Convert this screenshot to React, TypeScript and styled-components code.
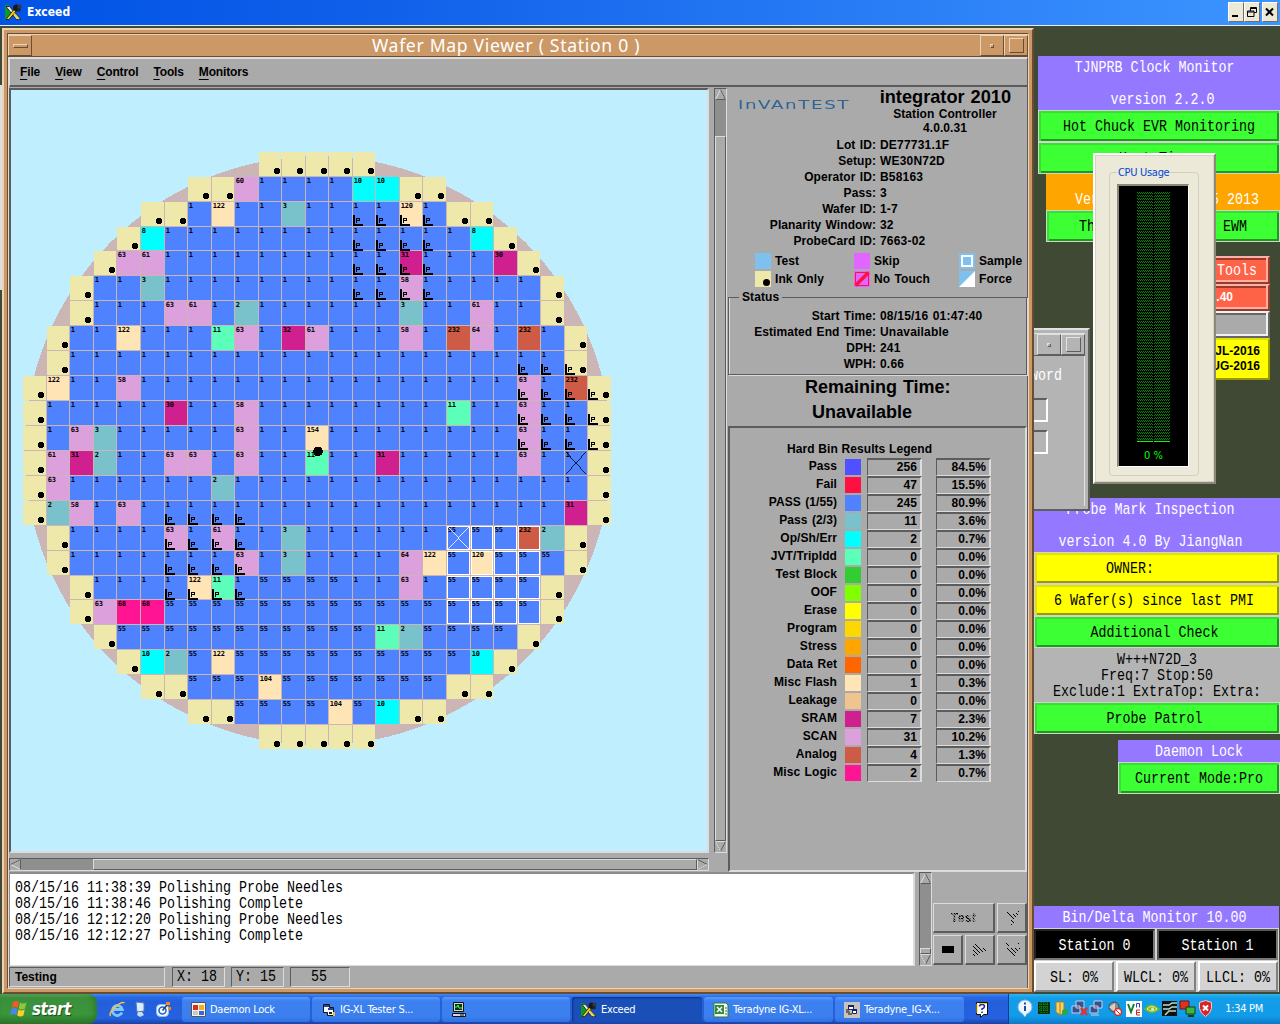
import React from "react";
import styled, { createGlobalStyle, css } from "styled-components";

const GlobalStyle = createGlobalStyle`
  * { box-sizing: border-box; }
  html, body { margin: 0; padding: 0; }
  body { width: 1280px; height: 1024px; overflow: hidden; font-family: "Liberation Sans", Arial, sans-serif; }
`;

const UI = `"Liberation Sans", Arial, sans-serif`;
const TAHOMA = `"DejaVu Sans Condensed", "DejaVu Sans", sans-serif`;

const bevel = (light: string, dark: string, w = 2) => css`
  border-style: solid;
  border-width: ${w}px;
  border-color: ${light} ${dark} ${dark} ${light};
`;

const Screen = styled.div`
  position: relative;
  display: flex;
  flex-direction: column;
  width: 1280px;
  height: 1024px;
  overflow: hidden;
  background: #3f4933;
`;

/* ---------- Exceed title bar ---------- */
const ExceedBar = styled.header`
  display: flex;
  align-items: center;
  height: 26px;
  padding: 0 2px 1px 5px;
  background: linear-gradient(90deg, #0053e5, #1160ea 30%, #3c95ff);
  border-bottom: 1px solid #e6eefa;
`;
const ExceedTitle = styled.span`
  flex: 1;
  margin-left: 5px;
  color: #fff;
  font: bold 12px/16px ${TAHOMA};
`;
const WinButton = styled.span<{ $gap?: boolean }>`
  display: flex;
  align-items: center;
  justify-content: center;
  width: 16px;
  height: 20px;
  margin-left: ${(p) => (p.$gap ? 2 : 0)}px;
  background: #ece9d8;
  ${bevel("#fff", "#716f64", 1)}
`;

/* ---------- Text helpers ---------- */
const Mono = styled.span<{ $color?: string }>`
  display: inline-block;
  height: 12px;
  margin: 2px 0;
  font: 13.333px/12px "Liberation Mono", monospace;
  white-space: pre;
  color: ${(p) => p.$color ?? "#000"};
  transform: translateY(0.8px) scaleY(1.26);
`;

/* ---------- Free windows on the desktop ---------- */
const Win = styled.section<{ $x: number; $y: number; $w: number; $h?: number }>`
  position: absolute;
  left: ${(p) => p.$x}px;
  top: ${(p) => p.$y}px;
  width: ${(p) => p.$w}px;
  ${(p) => p.$h && `height: ${p.$h}px;`}
  display: flex;
  flex-direction: column;
`;
const Banner = styled.div<{ $h: number; $bg: string; $pad?: number; $shift?: number }>`
  display: flex;
  flex-direction: column;
  align-items: center;
  justify-content: space-between;
  height: ${(p) => p.$h}px;
  padding: ${(p) => p.$pad ?? 3}px 0;
  padding-right: ${(p) => p.$shift ?? 0}px;
  background: ${(p) => p.$bg};
`;
const XButton = styled.div<{ $bg: string; $l: string; $d: string; $right?: number }>`
  display: flex;
  align-items: center;
  justify-content: center;
  height: 32px;
  padding-right: ${(p) => p.$right ?? 0}px;
  background: ${(p) => p.$bg};
  border: 1px solid #d3d3d3;
  box-shadow: inset 2px 2px 0 ${(p) => p.$l}, inset -2px -2px 0 ${(p) => p.$d};
`;
const Split = styled.div<{ $w: number; $ml?: number }>`
  display: flex;
  justify-content: space-between;
  width: ${(p) => p.$w}px;
  margin-left: ${(p) => p.$ml ?? 0}px;
`;
const PURPLE = "#9478ff";
const GREEN = { $bg: "#3cff34", $l: "#36e02e", $d: "#1f9a1b" };
const YELLOW = { $bg: "#ffff00", $l: "#e2e200", $d: "#9a9a00" };

/* ---------- Wafer window frame ---------- */
const Frame = styled(Win)`
  padding: 3px;
  background: #cc9966;
  ${bevel("#ecd3b8", "#664d33", 2)}
`;
const FrameInner = styled.div`
  display: flex;
  flex-direction: column;
  flex: 1;
  ${bevel("#664d33", "#ecd3b8", 1)}
`;
const FrameTitle = styled.div`
  display: flex;
  height: 23px;
  border-top: 1px solid #ecd3b8;
  border-bottom: 1px solid #664d33;
`;
const FrameButton = styled.span`
  display: flex;
  align-items: center;
  justify-content: center;
  width: 24px;
  ${bevel("#ecd3b8", "#664d33", 1)}
`;
const Bump = styled.i<{ $w: number; $h: number; $l?: string; $d?: string }>`
  width: ${(p) => p.$w}px;
  height: ${(p) => p.$h}px;
  ${(p) => bevel(p.$l ?? "#ecd3b8", p.$d ?? "#664d33", 1)}
`;
const FrameCaption = styled.h1`
  flex: 1;
  margin: 0;
  text-align: center;
  color: #fff;
  font: 400 17.6px/20px "Noto Sans", sans-serif;
  letter-spacing: 0.68px;
  white-space: pre;
`;
const Content = styled.div`
  display: flex;
  flex-direction: column;
  flex: 1;
  background: #aaaaaa;
  border-top: 1px solid #dcdcdc;
  border-left: 1px solid #dcdcdc;
  border-right: 1px solid #5c5c5c;
`;
const MenuBar = styled.nav`
  display: flex;
  gap: 15px;
  height: 29px;
  margin-bottom: 1px;
  padding: 5px 0 0 10px;
  font: bold 12px/16px ${UI};
  border-top: 1px solid #dcdcdc;
  border-left: 1px solid #dcdcdc;
  border-bottom: 2px solid #5c5c5c;
  letter-spacing: -0.14px;
`;
const MenuItem = styled.span`
  display: block;
  &::first-letter { text-decoration: underline; text-underline-offset: 3px; text-decoration-thickness: 1px; }
`;
const Upper = styled.div`
  display: flex;
  height: 784px;
`;
const MapColumn = styled.div`
  display: flex;
  flex-direction: column;
  width: 700px;
  gap: 5px;
`;
const MapFrame = styled.div`
  height: 765px;
  background: #bfefff;
  ${bevel("#5c5c5c", "#dcdcdc", 2)}
  svg { display: block; }
`;

/* ---------- Scroll bars ---------- */
const VScroll = styled.div<{ $h: number; $ml: number }>`
  display: flex;
  flex-direction: column;
  width: 13px;
  height: ${(p) => p.$h}px;
  margin-left: ${(p) => p.$ml}px;
  background: #8f8f8f;
  ${bevel("#5c5c5c", "#dcdcdc", 1)}
`;
const HScroll = styled.div`
  display: flex;
  height: 13px;
  background: #8f8f8f;
  ${bevel("#5c5c5c", "#dcdcdc", 1)}
`;
const Thumb = styled.span<{ $size?: number }>`
  flex: ${(p) => (p.$size ? `0 0 ${p.$size}px` : "1")};
  background: #aaa;
  ${bevel("#dcdcdc", "#5c5c5c", 1)}
`;
const Trough = styled.span<{ $size?: number }>`
  flex: ${(p) => (p.$size ? `0 0 ${p.$size}px` : "1")};
`;
const ArrowSvg = styled.svg`
  display: block;
  flex: none;
  background: #aaa;
`;
function Arrow({ dir }: { dir: "up" | "down" | "left" | "right" }) {
  const rot = { up: 0, right: 90, down: 180, left: 270 }[dir];
  const flip = dir === "down" || dir === "right";
  return (
    <ArrowSvg width="11" height="11" viewBox="0 0 11 11">
      <g transform={`rotate(${rot} 5.5 5.5)`} fill="none">
        <path d="M0.5 10.5 L5.5 0.5 L10.5 10.5" stroke={flip ? "#5c5c5c" : "#dcdcdc"} />
        <path d="M5.5 0.5 L10.5 10.5 H0.5" stroke={flip ? "#dcdcdc" : "#5c5c5c"} />
      </g>
    </ArrowSvg>
  );
}

/* ---------- Wafer map ---------- */
const BIN_COLORS: Record<string, string> = {
  "1": "#4f82ff", "55": "#4f82ff", "2": "#79c2cb", "3": "#79c2cb", "8": "#00ffff", "10": "#00ffff",
  "11": "#5cffb9", "122": "#ffe4b6", "120": "#ffe4b6", "104": "#ffe4b6", "154": "#ffe4b6",
  "30": "#d01f8f", "31": "#d01f8f", "32": "#d01f8f", "232": "#cd5b45", "68": "#ff1493",
  "58": "#dca0dc", "60": "#dca0dc", "61": "#dca0dc", "63": "#dca0dc", "64": "#dca0dc", i: "#eee8aa",
};
/* first column, then bins left to right; suffix p = probe mark, s = sample, k / w = crossed die, *n = repeat */
const ROWS: [number, string][] = [
  [10, "i*5"],
  [7, "i*2 60 1*4 10*2 i*2"],
  [5, "i*2 1 122 1*2 3 1*2 1p*2 120p 1p i*2"],
  [4, "i 8 1*8 1p*4 1 8 i"],
  [3, "i 63 61 1*8 1p*2 31p 1p 1*2 30 i"],
  [2, "i 1*2 3 1*8 1p*2 58p 1p 1*4 i"],
  [2, "i 1*3 63 61 1 2 1*6 3 1*2 61 1*2 i"],
  [1, "i 1*2 122 1*3 11 63 1 32 61 1*3 58 1 232 64 1 232 1 i"],
  [1, "i 1*19 1p*2 ip"],
  [0, "i 122 1*2 58 1*16 63p 1p 232p ip"],
  [0, "i 1*5 30 1*2 58 1*8 11 1*2 63p 1p*2 ip"],
  [0, "i 1 63 3 1*5 63 1*2 154 1*8 63p 1p*2 ip"],
  [0, "i 61 31 2 1*2 63*2 1 63 1*2 11 1*2 31 1*5 63 1 1k i"],
  [0, "i 63 1*6 2 1*15 i"],
  [0, "i 2 58 1 63 1 1p*4 1*13 31 i"],
  [1, "i 1*4 63p 1p 61p 1p 1 3 1*6 55sw 55s*2 232s 2 i"],
  [1, "i 1*4 1p*3 63p 1 3 1*4 64 122 55s 120s 55s*2 55 i"],
  [2, "i 1*3 1p 122p 11p 1p 55*4 1*2 63 1 55s*4 i"],
  [2, "i 63 68*2 55*12 55s*4 i"],
  [3, "i 55*11 11 2 55*4 i"],
  [4, "i 10 2 55 122 55*10 10 i"],
  [5, "i*2 55*3 104 55*7 i*2"],
  [7, "i*2 55*4 104 55 10 i*2"],
  [10, "i*5"],
];
const colX = (i: number) => Math.round(23.3 + 23.541 * i);
const rowY = (i: number) => Math.floor(152.22 + 24.93 * i);

const DieText = styled.text`
  font: bold 7px "DejaVu Sans Mono", monospace;
  letter-spacing: -0.2px;
`;
function Die({ c, r, code }: { c: number; r: number; code: string }) {
  const m = /^(i|\d+)([pskw]*)$/.exec(code)!;
  const bin = m[1];
  const f = m[2];
  const x = colX(c), y = rowY(r);
  const w = colX(c + 1) - x - 1, h = rowY(r + 1) - y - 1;
  const cross = f.includes("k") ? "#000" : f.includes("w") ? "#fff" : null;
  return (
    <g>
      <rect x={x} y={y} width={w} height={h} fill={BIN_COLORS[bin]} />
      {bin === "i" ? <circle cx={x + 18} cy={y + 19} r={3.2} /> : <DieText x={x + 0.8} y={y + 6}>{bin}</DieText>}
      {f.includes("p") && (
        <>
          <path d={`M${x} ${y + 13}h2v9h8v2h-10z`} />
          <path d={`M${x + 3.5} ${y + 21}v-4.5h2.5v2h-2`} fill="none" stroke="#000" />
        </>
      )}
      {f.includes("s") && <rect x={x + 0.5} y={y + 0.5} width={w - 1} height={h - 1} fill="none" stroke="#fff" />}
      {cross && <path d={`M${x + 1} ${y + 1}l${w - 2} ${h - 2}M${x + 1} ${y + h - 1}l${w - 2} ${2 - h}`} stroke={cross} strokeWidth="0.8" fill="none" />}
    </g>
  );
}
function WaferMap() {
  return (
    <svg width="696" height="761" viewBox="11 90 696 761" shapeRendering="crispEdges">
      <ellipse cx="318" cy="450.7" rx="293.5" ry="294.5" fill="#ccb5b5" />
      {ROWS.map(([start, spec], r) => {
        let c = start;
        return spec.split(" ").flatMap((t) => {
          const [code, n] = t.split("*");
          return Array.from({ length: Number(n ?? 1) }, () => {
            const k = c++;
            return <Die key={`${r}-${k}`} c={k} r={r} code={code} />;
          });
        });
      })}
      <circle cx="318" cy="451.5" r="4.8" />
    </svg>
  );
}

/* ---------- Right-hand information panel ---------- */
const InfoPanel = styled.aside`
  display: flex;
  flex-direction: column;
  width: 299px;
  margin-left: 1px;
  font: bold 12px/16px ${UI};
  letter-spacing: 0.08px;
  word-spacing: 0.9px;
`;
const Head = styled.div`
  display: flex;
  height: 49px;
`;
const Logo = styled.div`
  width: 138px;
  padding: 9px 0 0 10px;
  color: #2f6496;
  font: 400 12px/16px "DejaVu Sans", sans-serif;
  letter-spacing: 1px;
  span { display: inline-block; transform: scaleX(1.53); transform-origin: 0 0; }
`;
const Product = styled.div`
  display: flex;
  flex-direction: column;
  align-items: center;
  width: 158px;
  line-height: 14px;
  strong { font-size: 18.2px; line-height: 19px; letter-spacing: 0; white-space: nowrap; align-self: flex-end; margin-right: 13px; }
`;
const Field = styled.div`
  display: grid;
  grid-template-columns: 148px 1fr;
  column-gap: 4px;
  height: 16px;
  b { text-align: right; white-space: nowrap; }
  span { letter-spacing: 0.2px; }
`;
const Keys = styled.div`
  display: grid;
  grid-template-columns: 99px 105px 1fr;
  row-gap: 2px;
  padding: 4px 0 0 27px;
`;
const Key = styled.div`
  display: flex;
  gap: 4px;
  height: 16px;
  svg { display: block; flex: none; }
`;
const StatusBox = styled.fieldset`
  height: 85px;
  margin: 3px 0 0;
  padding: 3px 0 0;
  border: 1px solid #5c5c5c;
  box-shadow: 1px 1px 0 #dcdcdc, inset 1px 0 0 #dcdcdc;
  min-width: 0;
  legend { margin-left: 10px; padding: 0 3px; line-height: 15px; background: #aaa; }
  ${Field} { grid-template-columns: 147px 1fr; }
`;
const Remaining = styled.div`
  display: flex;
  flex-direction: column;
  height: 51px;
  padding-left: 77px;
  font: bold 18px/25px ${UI};
  letter-spacing: 0;
  white-space: nowrap;
  span + span { padding-left: 7px; }
`;
const Results = styled.div`
  flex: 1;
  padding: 13px 0 0;
  ${bevel("#5c5c5c", "#dcdcdc", 2)}
`;
const ResultsTitle = styled.h2`
  margin: 0 0 1px 57px;
  font: bold 12px/16px ${UI};
  letter-spacing: 0.05px;
  word-spacing: 0.4px;
`;
const BinRow = styled.div`
  display: grid;
  grid-template-columns: 107px 16px 55px 55px;
  height: 18px;
  line-height: 17px;
  column-gap: 0;
  grid-template-columns: 107px 8px 16px 6px 55px 14px 55px;
`;
const BinName = styled.span`
  grid-column: 1;
  text-align: right;
  white-space: nowrap;
`;
const Swatch = styled.i<{ $c: string }>`
  grid-column: 3;
  width: 16px;
  height: 16px;
  margin-top: 1px;
  background: ${(p) => p.$c};
`;
const Cell = styled.span<{ $col: number }>`
  grid-column: ${(p) => p.$col};
  height: 18px;
  padding-right: 3px;
  text-align: right;
  line-height: 15px;
  border: solid;
  border-width: 2px 2px 1px 1px;
  border-color: #5c5c5c #dcdcdc #dcdcdc #5c5c5c;
`;
const BINS: [string, string, string, string][] = [
  ["Pass", "#4f50ff", "256", "84.5%"],
  ["Fail", "#ff1040", "47", "15.5%"],
  ["PASS (1/55)", "#4f82ff", "245", "80.9%"],
  ["Pass (2/3)", "#79c2cb", "11", "3.6%"],
  ["Op/Sh/Err", "#00ffff", "2", "0.7%"],
  ["JVT/TripIdd", "#5cffb9", "0", "0.0%"],
  ["Test Block", "#32cd32", "0", "0.0%"],
  ["OOF", "#80ff00", "0", "0.0%"],
  ["Erase", "#ffff00", "0", "0.0%"],
  ["Program", "#ffd700", "0", "0.0%"],
  ["Stress", "#ffa500", "0", "0.0%"],
  ["Data Ret", "#ff6600", "0", "0.0%"],
  ["Misc Flash", "#ffe4b6", "1", "0.3%"],
  ["Leakage", "#eec591", "0", "0.0%"],
  ["SRAM", "#d01f8f", "7", "2.3%"],
  ["SCAN", "#dca0dc", "31", "10.2%"],
  ["Analog", "#cd5b45", "4", "1.3%"],
  ["Misc Logic", "#ff1493", "2", "0.7%"],
];
const LOT: [string, string][] = [
  ["Lot ID:", "DE77731.1F"], ["Setup:", "WE30N72D"], ["Operator ID:", "B58163"], ["Pass:", "3"],
  ["Wafer ID:", "1-7"], ["Planarity Window:", "32"], ["ProbeCard ID:", "7663-02"],
];
const STATUS: [string, string][] = [
  ["Start Time:", "08/15/16 01:47:40"], ["Estimated End Time:", "Unavailable"], ["DPH:", "241"], ["WPH:", "0.66"],
];

/* ---------- Lower strip ---------- */
const Lower = styled.div`
  display: flex;
  height: 95px;
`;
const Log = styled.div`
  display: flex;
  flex-direction: column;
  align-items: flex-start;
  width: 906px;
  height: 94px;
  padding: 5px 0 0 5px;
  background: #fff;
  border: solid;
  border-width: 2px 2px 1px 1px;
  border-color: #8c8c8c #dcdcdc #dcdcdc #8c8c8c;
`;
const Pad = styled.div`
  display: grid;
  grid-template-columns: 30px 30px 30px;
  grid-template-rows: 30px 30px;
  gap: 2px;
  padding: 31px 0 0 1px;
`;
const PadButton = styled.div<{ $wide?: boolean }>`
  display: flex;
  align-items: center;
  justify-content: center;
  grid-column: ${(p) => (p.$wide ? "span 2" : "auto")};
  ${bevel("#dcdcdc", "#5c5c5c", 1)}
  border-right-width: 2px;
  border-bottom-width: 2px;
`;
const Stippled = styled.span`
  font: bold 12px/14px ${UI};
  letter-spacing: 0.4px;
  color: transparent;
  background: repeating-linear-gradient(45deg, #000 0 1px, #888 1px 2px);
  background-clip: text;
  -webkit-background-clip: text;
`;
const StatusRow = styled.div`
  display: flex;
  align-items: flex-start;
  height: 21px;
`;
const StatusCell = styled.div<{ $w: number; $ml?: number }>`
  width: ${(p) => p.$w}px;
  height: 20px;
  margin-left: ${(p) => p.$ml ?? 0}px;
  padding-left: 5px;
  font: bold 12px/18px ${UI};
  ${bevel("#5c5c5c", "#dcdcdc", 1)}
`;
const StatusNum = styled(StatusCell)<{ $center?: boolean }>`
  padding-left: ${(p) => (p.$center ? 20 : 4)}px;
  line-height: 12px;
`;

function HatchTri({ kind }: { kind: "right" | "y1" | "y2" }) {
  const shape = {
    right: "M0 1 L14 8 L0 15Z",
    y1: "M0 1 L7 5 L14 1 L15 4 L9 9 V15 L6 15 V9 L0 4Z",
    y2: "M0 6 H15 L8 15Z M1 1 L5 4 M14 1 L10 4",
  }[kind];
  return (
    <svg width="18" height="18" viewBox="0 0 18 18" shapeRendering="crispEdges">
      <defs>
        <pattern id={`hatch-${kind}`} width="4" height="4" patternUnits="userSpaceOnUse">
          <path d="M0 0h1v1h-1zM1 1h1v1h-1zM2 2h1v1h-1zM3 3h1v1h-1z" fill="#000" />
        </pattern>
      </defs>
      <path d={shape} fill={`url(#hatch-${kind})`} stroke={kind === "y2" ? `url(#hatch-${kind})` : "none"} transform="translate(2 1)" />
    </svg>
  );
}

/* ---------- Password window ---------- */
const GreyFrame = styled(Win)`
  padding: 3px;
  background: #b4b4b4;
  ${bevel("#e2e2e2", "#5e5e5e", 2)}
`;
const GreyTitle = styled.div`
  display: flex;
  justify-content: flex-end;
  height: 23px;
  border-bottom: 1px solid #5e5e5e;
  border-top: 1px solid #e2e2e2;
`;
const GreyButton = styled.span`
  display: flex;
  align-items: center;
  justify-content: center;
  width: 24px;
  ${bevel("#e2e2e2", "#5e5e5e", 1)}
`;
const GreyBody = styled.div`
  display: flex;
  flex-direction: column;
  align-items: flex-end;
  flex: 1;
  padding: 11px 22px 0 0;
  border-right: 1px solid #e2e2e2;
`;
const Input = styled.div<{ $mt: number }>`
  width: 60px;
  height: 24px;
  margin: ${(p) => p.$mt}px 14px 0 0;
  ${bevel("#5e5e5e", "#fff", 2)}
`;

/* ---------- Tools window ---------- */
const ToolRow = styled.div<{ $h: number; $bg: string; $l: string; $d: string; $flat?: boolean }>`
  display: flex;
  flex-direction: column;
  justify-content: center;
  height: ${(p) => p.$h}px;
  background: ${(p) => p.$bg};
  ${(p) => bevel(p.$l, p.$d, 2)}
  box-shadow: ${(p) => (p.$flat ? "none" : `inset -2px -2px 0 ${p.$l}, inset 2px 2px 0 ${p.$d}`)};
  padding-right: ${(p) => (p.$flat ? 8 : 11)}px;
  text-align: right;
  font: bold 12px/15px ${UI};
`;
const Version = styled.span`
  padding-right: 24px;
  color: #fff;
`;

/* ---------- CPU usage ---------- */
const CpuWin = styled(Win)`
  padding: 11px 15px 6px 14px;
  background: #ece9d8;
  border: solid;
  border-width: 2px;
  border-color: #fff #8a877c #8a877c #fff;
  outline: 1px solid #d6d3c4;
  outline-offset: -3px;
`;
const CpuGroup = styled.fieldset`
  display: flex;
  flex: 1;
  margin: 0;
  padding: 5px 9px 6px 7px;
  min-width: 0;
  border: 1px solid #d0d0bf;
  border-radius: 4px;
  legend { padding: 0 1px; color: #0046d5; font: 11px/13px ${TAHOMA}; letter-spacing: -0.3px; white-space: nowrap; }
`;
const CpuScreen = styled.div`
  display: flex;
  flex-direction: column;
  align-items: center;
  height: 283px;
  width: 100%;
  padding-top: 6px;
  background: #000;
  ${bevel("#8a877c", "#fff", 2)}
  border-width: 2px 1px 1px 2px;
  span { margin-top: 5px; color: #00ff00; font: 11px/16px ${TAHOMA}; }
`;

/* ---------- Bin / Delta ---------- */
const ButtonRow = styled.div`
  display: flex;
  gap: 2px;
  height: 32px;
  padding: 1px 1px 0 0;
  background: #d3d3d3;
`;
const FlatButton = styled.div<{ $bg: string; $l: string; $d: string }>`
  flex: 1;
  display: flex;
  align-items: center;
  justify-content: center;
  background: ${(p) => p.$bg};
  ${(p) => bevel(p.$l, p.$d, 2)}
`;

/* ---------- Taskbar ---------- */
const Desktop = styled.main`
  flex: 1;
`;
const BackStrip = styled.div`
  width: 2px;
  height: 205px;
  margin-top: 59px;
  background: #dedede;
`;
const Taskbar = styled.footer`
  position: relative;
  display: flex;
  height: 30px;
  background: linear-gradient(#3f8cf3 0, #2a6ae6 3px, #245edb 8px, #2562df 24px, #1941a5 100%);
`;
const Start = styled.div`
  display: flex;
  align-items: center;
  gap: 4px;
  width: 97px;
  padding-left: 10px;
  color: #fff;
  font: italic bold 17px/24px ${TAHOMA};
  letter-spacing: -0.6px;
  text-shadow: 1px 1px 1px #1c4a1c;
  background: linear-gradient(#5cab5c 0, #3c8f3c 4px, #3a963a 20px, #2c752c 100%);
  border-radius: 0 9px 9px 0;
  box-shadow: inset -3px 0 4px #23692380;
`;
const Quick = styled.div`
  display: flex;
  align-items: center;
  gap: 7px;
  width: 85px;
  padding-left: 12px;
`;
const Task = styled.div<{ $w: number; $on?: boolean }>`
  display: flex;
  align-items: center;
  gap: 4px;
  width: ${(p) => p.$w}px;
  height: 25px;
  margin: 3px 2px 0 0;
  padding-left: 9px;
  color: #fff;
  font: 11px/16px ${TAHOMA};
  letter-spacing: -0.25px;
  white-space: nowrap;
  border-radius: 3px;
  background: ${(p) => (p.$on ? "#1b4fb8" : "linear-gradient(#5a9bf8 0, #3d80f0 4px, #3b7eee 20px, #3270e0 100%)")};
  box-shadow: ${(p) => (p.$on ? "inset 1px 1px 2px #0d2f80" : "none")};
`;
const HelpSlot = styled.div`
  display: flex;
  align-items: center;
  width: 42px;
  padding-left: 9px;
`;
const Tray = styled.div`
  flex: 1;
  display: flex;
  align-items: center;
  padding: 0 17px 0 6px;
  color: #fff;
  font: 11px/16px ${TAHOMA};
  letter-spacing: -0.3px;
  background: linear-gradient(#2cb4f4 0, #139ee9 4px, #119be8 22px, #0c78c8 100%);
  border-left: 1px solid #0b3c8c;
  span { margin-left: auto; white-space: nowrap; }
`;

function ExceedIcon({ s = 17 }: { s?: number }) {
  return (
    <svg width={s} height={s} viewBox="0 0 17 17">
      <path d="M0 1h4v3l3 3-3 6v3H0z" fill="#0a9a2a" />
      <path d="M1 2.500h3.500L15.500 15.500h-4z" fill="#f2ead0" stroke="#111" strokeWidth="0.800" />
      <path d="M12.500 5.500L4 15.500H1L10 4z" fill="#f0d020" stroke="#111" strokeWidth="0.800" />
      <path d="M9 9.500l5 5.500" stroke="#f0d020" strokeWidth="1.800" />
      <circle cx="11.500" cy="4" r="3.400" fill="#15181c" />
      <circle cx="14.300" cy="2.800" r="2.200" fill="#33383c" />
      <circle cx="14" cy="6" r="1.800" fill="#22262a" />
    </svg>
  );
}
const Flag = () => (
  <svg width="18" height="18" viewBox="0 0 18 18">
    <path d="M3 2q3-2 6 0l-1.300 6q-3-2-6 0z" fill="#f0592b" />
    <path d="M10 2.400q3 2 6.500 0L15 8.500q-3 2-6.300 0z" fill="#8cc83c" />
    <path d="M1.500 9q3-2 6 0l-1.300 6q-3-2-6 0z" fill="#4a86f0" />
    <path d="M8.500 9.500q3 2 6.300 0l-1.400 6q-3 2-6.200 0z" fill="#fbcf2c" />
  </svg>
);
const Ie = () => (
  <svg width="17" height="17" viewBox="0 0 17 17" fill="none">
    <path d="M13 11.500A5 5 0 1 1 13.300 8.500H4" stroke="#7cc8ff" strokeWidth="2.800" />
    <path d="M1.500 15C-1 11 12-1 15.500 2" stroke="#f5c23a" strokeWidth="1.500" />
  </svg>
);
const Pc = () => (
  <svg width="15" height="17" viewBox="0 0 15 17">
    <path d="M3 1l8 1v8l-7 1z" fill="#d8ecff" stroke="#5580b0" />
    <path d="M5 11h4l2 3-4 2-3-2z" fill="#c8dcf0" />
  </svg>
);
const Outlook = () => (
  <svg width="17" height="17" viewBox="0 0 17 17">
    <rect x="1.500" y="3.500" width="12" height="12" rx="4" fill="#f4faff" stroke="#8fc0f0" />
    <circle cx="7.500" cy="9.500" r="3.500" fill="none" stroke="#2266c8" strokeWidth="1.600" />
    <path d="M7.500 9.500l5-6" stroke="#1c3c78" strokeWidth="1.500" />
    <path d="M11 1h4v3h-4zM13 6h3v3h-3z" fill="#f28a20" />
  </svg>
);
const FormIcon = () => (
  <svg width="15" height="15" viewBox="0 0 15 15">
    <path d="M.5.500h14v14H.5z" fill="#f2f2f2" stroke="#555" />
    <path d="M2 3h5v5H2z" fill="#d83020" /><path d="M8 3h5v5H8z" fill="#f0b020" />
    <path d="M2 9h5v4H2z" fill="#c8c8c8" /><path d="M8 9h5v4H8z" fill="#3868d0" />
  </svg>
);
const VbIcon = () => (
  <svg width="15" height="15" viewBox="0 0 15 15">
    <path d="M2.500 2.500h6v3h4v8h-6v-3h-4z" fill="#fff" stroke="#111" />
    <path d="M3 4h5M7 7h5" stroke="#23489c" strokeWidth="2" /><path d="M8 10h3v2H8z" fill="#222" /><path d="M12 10h2v4h-2z" fill="#e8c030" />
  </svg>
);
const MonitorIcon = () => (
  <svg width="16" height="16" viewBox="0 0 16 16">
    <path d="M2.500.500h10v9h-10zM1.500 11.500h13v3h-13z" fill="#d8d8d0" stroke="#111" />
    <path d="M4 2h7v6H4z" fill="#023a10" /><path d="M4 5h2l1-2 1 3h3" stroke="#3cff50" fill="none" /><path d="M9 13h4" stroke="#111" />
  </svg>
);
const XlIcon = () => (
  <svg width="16" height="16" viewBox="0 0 16 16">
    <path d="M1 1h12l2 2v12H1z" fill="#f4f8f0" stroke="#2f7a3a" /><path d="M2 3h9v9H2z" fill="#2f8a44" />
    <path d="M4 5l5 5M9 5l-5 5" stroke="#fff" strokeWidth="1.500" /><path d="M12 6h2M12 9h2M12 12h2" stroke="#2f7a3a" />
  </svg>
);
const DocIcon = () => (
  <svg width="16" height="16" viewBox="0 0 16 16">
    <path d="M0 0h16v16H0z" fill="#c6c3bc" />
    <path d="M4.500 3.500h5v4h-5zM8.500 7.500h4v4h-4z" fill="#fff" stroke="#15206c" />
    <path d="M4 4h6M8 8h5" stroke="#15206c" strokeWidth="2" />
    <path d="M2 10h4M2 8h3M4 12h4" stroke="#111" />
  </svg>
);
const HelpIcon = () => (
  <svg width="15" height="17" viewBox="0 0 15 17">
    <path d="M1.500 1.500h11v12h-4l-3 3v-3h-4z" fill="#fff" stroke="#111" />
    <path d="M4.500 5.500q0-2 2.500-2t2.500 2q0 1.500-2.500 2.500v1M7 10.500v1.500" stroke="#1c2c9c" strokeWidth="1.600" fill="none" />
    <path d="M2 3v9M4 2.500h8" stroke="#f0d020" />
  </svg>
);
function TrayIcons() {
  return (
    <svg width="200" height="20" viewBox="1015 999 200 20" fill="none">
      <circle cx="1025" cy="1007" r="7" fill="#eef6ff" stroke="#8fb4dc" />
      <path d="M1022 1013l3 4 2-4z" fill="#eef6ff" />
      <path d="M1025 1006v5M1025 1002.500v2" stroke="#1c4c9c" strokeWidth="2" />
      <path d="M1038 1002h12v12h-12z" fill="#032e08" />
      <path d="M1039 1004h10M1039 1007h10M1039 1010h10M1041 1002v12M1044 1002v12M1047 1002v12" stroke="#18a028" strokeDasharray="1 1" />
      <path d="M1056 1002h8v11l-4 2-4-3z" fill="#f4d468" stroke="#a47c1c" />
      <path d="M1060 1003v11" stroke="#a47c1c" />
      <circle cx="1065" cy="1012" r="3" fill="#2ca83c" />
      <path d="M1076 1001h8v7h-8zM1072 1006h8v7h-8z" fill="#3a508c" stroke="#c4d0e8" />
      <path d="M1081 1008l6 7M1087 1008l-6 7" stroke="#e8302c" strokeWidth="2.500" />
      <path d="M1094 1001h8v7h-8zM1090 1006h8v7h-8z" fill="#3a508c" stroke="#c4d0e8" />
      <path d="M1091 1015h8" stroke="#c4d0e8" />
      <circle cx="1114" cy="1007" r="5" fill="#8c8c8c" stroke="#444" />
      <path d="M1109 1007l6-4v9z" fill="#d0d0d0" />
      <circle cx="1118" cy="1012" r="3.500" fill="#fff" stroke="#d82c28" strokeWidth="1.500" />
      <path d="M1116 1010l4 4" stroke="#d82c28" />
      <path d="M1126 1001h16v16h-16z" fill="#fff" />
      <path d="M1128 1004l3 8 3-8" stroke="#108030" strokeWidth="2" />
      <path d="M1136.500 1007.500v-4h3v4" stroke="#2840c0" />
      <path d="M1140 1010h-3.500v5h3.500M1137 1012.500h3" stroke="#c82828" />
      <path d="M1144 1009q7-9 16 0q-8 8-16 0z" fill="#78b81c" />
      <path d="M1147 1009q5-5 10 0q-5 4-10 0z" stroke="#dff0b8" />
      <circle cx="1152.500" cy="1009" r="1.500" fill="#dff0b8" />
      <path d="M1162 1001h15v15h-15z" fill="#111" />
      <path d="M1163 1005h6l3-2h5M1163 1009h6l3-2h5M1165 1015l4-4h7" stroke="#b8dcd0" strokeWidth="1.500" />
      <path d="M1180 1001h9v8h-9z" fill="#e03020" stroke="#6c1410" />
      <path d="M1186 1007h9v7h-9z" fill="#3cb83c" stroke="#163c16" />
      <path d="M1188 1016h6" stroke="#163c16" strokeWidth="2" />
      <path d="M1205.500 1000.500l-6 2v6q1 5 6 8q5-3 6-8v-6z" fill="#d8242c" stroke="#fbc8c4" />
      <path d="M1203 1005.500l5 5M1208 1005.500l-5 5" stroke="#fff" strokeWidth="2" />
    </svg>
  );
}

export default function App() {
  return (
    <Screen>
      <GlobalStyle />
      <ExceedBar>
        <ExceedIcon />
        <ExceedTitle>Exceed</ExceedTitle>
        <WinButton><svg width="10" height="10"><path d="M1 8h6v2H1z" /></svg></WinButton>
        <WinButton><svg width="10" height="10" fill="none" stroke="#000"><path d="M3.500 4V.500h6v5H7M3 1.500h7M.5 4h6.500v5.500H.5zM.5 5h6" /></svg></WinButton>
        <WinButton $gap><svg width="10" height="10"><path d="M1 1.500l7 7M8 1.500l-7 7" stroke="#000" strokeWidth="2" /></svg></WinButton>
      </ExceedBar>

      <Desktop>
        <BackStrip />

        <Win $x={1038} $y={56} $w={242}>
          <Banner $h={54} $bg={PURPLE} $shift={9}>
            <Mono $color="#fff">TJNPRB Clock Monitor</Mono>
            <Mono $color="#fff">{"  version 2.2.0"}</Mono>
          </Banner>
          <XButton {...GREEN}><Mono>Hot Chuck EVR Monitoring</Mono></XButton>
          <XButton {...GREEN}><Mono>Heat Timer</Mono></XButton>
        </Win>

        <Win $x={1046} $y={174} $w={234}>
          <Banner $h={36} $bg="#ffa500">
            <span />
            <Split $w={184} $ml={8}><Mono $color="#fff">Ver</Mono><Mono $color="#fff">5 2013</Mono></Split>
          </Banner>
          <XButton {...GREEN}><Split $w={168}><Mono>Th</Mono><Mono>EWM</Mono></Split></XButton>
        </Win>

        <Win $x={1180} $y={256} $w={90}>
          <ToolRow $h={28} $bg="#ff6347" $l="#ffb0a2" $d="#993b2a"><Mono $color="#fff">Tools</Mono></ToolRow>
          <ToolRow $h={27} $bg="#ff6347" $l="#ffb0a2" $d="#993b2a"><Version>.40</Version></ToolRow>
          <ToolRow $h={27} $bg="#aaaaaa" $l="#f0f0f0" $d="#666" />
          <ToolRow $h={42} $bg="#ffff00" $l="#e2e200" $d="#9a9a00" $flat><span>JL-2016</span><span>UG-2016</span></ToolRow>
        </Win>

        <Win $x={1034} $y={498} $w={246}>
          <Banner $h={54} $bg={PURPLE} $shift={13}>
            <Mono $color="#fff">Probe Mark Inspection</Mono>
            <Mono $color="#fff">version 4.0 By JiangNan</Mono>
          </Banner>
          <XButton {...YELLOW} $right={54}><Mono>OWNER:</Mono></XButton>
          <XButton {...YELLOW} $right={6}><Mono>6 Wafer(s) since last PMI</Mono></XButton>
          <XButton {...GREEN} $right={5}><Mono>Additional Check</Mono></XButton>
          <Banner $h={54} $bg="#b4b4b4">
            <Mono>W+++N72D_3</Mono>
            <Mono>Freq:7 Stop:50</Mono>
            <Mono>Exclude:1 ExtraTop: Extra:</Mono>
          </Banner>
          <XButton {...GREEN} $right={5}><Mono>Probe Patrol</Mono></XButton>
        </Win>

        <Win $x={1118} $y={740} $w={162}>
          <Banner $h={22} $bg={PURPLE}><Mono $color="#fff">Daemon Lock</Mono></Banner>
          <XButton {...GREEN}><Mono>Current Mode:Pro</Mono></XButton>
        </Win>

        <Win $x={1034} $y={906} $w={245}>
          <Banner $h={22} $bg={PURPLE} $shift={4}><Mono $color="#fff">Bin/Delta Monitor 10.00</Mono></Banner>
          <ButtonRow>
            <FlatButton $bg="#000" $l="#222" $d="#777"><Mono $color="#fff">Station 0</Mono></FlatButton>
            <FlatButton $bg="#000" $l="#555" $d="#777"><Mono $color="#fff">Station 1</Mono></FlatButton>
          </ButtonRow>
          <ButtonRow>
            {["SL: 0%", "WLCL: 0%", "LLCL: 0%"].map((t) => (
              <FlatButton key={t} $bg="#d3d3d3" $l="#fff" $d="#808080"><Mono>{t}</Mono></FlatButton>
            ))}
          </ButtonRow>
        </Win>

        <GreyFrame $x={960} $y={328} $w={130} $h={183}>
          <GreyTitle>
            <GreyButton><Bump $w={4} $h={4} $l="#e2e2e2" $d="#5e5e5e" /></GreyButton>
            <GreyButton><Bump $w={15} $h={15} $l="#e2e2e2" $d="#5e5e5e" /></GreyButton>
          </GreyTitle>
          <GreyBody>
            <Mono $color="#fff">Password</Mono>
            <Input $mt={15} />
            <Input $mt={8} />
          </GreyBody>
        </GreyFrame>

        <Frame $x={2} $y={28} $w={1032} $h={966}>
          <FrameInner>
            <FrameTitle>
              <FrameButton><Bump $w={15} $h={4} /></FrameButton>
              <FrameCaption>Wafer Map Viewer ( Station 0 )</FrameCaption>
              <FrameButton><Bump $w={4} $h={4} /></FrameButton>
              <FrameButton><Bump $w={15} $h={15} /></FrameButton>
            </FrameTitle>
            <Content>
              <MenuBar>
                {["File", "View", "Control", "Tools", "Monitors"].map((m) => <MenuItem key={m}>{m}</MenuItem>)}
              </MenuBar>
              <Upper>
                <MapColumn>
                  <MapFrame><WaferMap /></MapFrame>
                  <HScroll>
                    <Arrow dir="left" /><Trough $size={72} /><Thumb /><Arrow dir="right" />
                  </HScroll>
                </MapColumn>
                <VScroll $h={765} $ml={5}>
                  <Arrow dir="up" /><Trough $size={36} /><Thumb /><Arrow dir="down" />
                </VScroll>
                <InfoPanel>
                  <Head>
                    <Logo><span>InVAnTEST</span></Logo>
                    <Product>
                      <strong>integrator 2010</strong>
                      <span>Station Controller</span>
                      <span>4.0.0.31</span>
                    </Product>
                  </Head>
                  {LOT.map(([k, v]) => <Field key={k}><b>{k}</b><span>{v}</span></Field>)}
                  <Keys>
                    <Key><svg width="16" height="16"><path d="M0 0h16v16H0z" fill="#7ec0ee" /></svg>Test</Key>
                    <Key><svg width="16" height="16"><path d="M0 0h16v16H0z" fill="#e066ff" /></svg>Skip</Key>
                    <Key><svg width="16" height="16"><path d="M0 0h16v16H0z" fill="#7ec0ee" /><path d="M3 3h10v10H3z" fill="none" stroke="#fff" strokeWidth="2" /></svg>Sample</Key>
                    <Key><svg width="16" height="16"><path d="M0 0h16v16H0z" fill="#eee8aa" /><circle cx="11.500" cy="11.500" r="3.500" /></svg>Ink Only</Key>
                    <Key><svg width="16" height="16"><path d="M0 0h16v16H0z" fill="#e066ff" /><path d="M1.500 1.500h13v13h-13z" fill="none" stroke="#ff1040" /><path d="M1.500 14.500l13-13" stroke="#ff1040" strokeWidth="3.500" /></svg>No Touch</Key>
                    <Key><svg width="16" height="16"><path d="M0 0h16v16H0z" fill="#7ec0ee" /><path d="M16 0v16H0z" fill="#fff" /></svg>Force</Key>
                  </Keys>
                  <StatusBox>
                    <legend>Status</legend>
                    {STATUS.map(([k, v]) => <Field key={k}><b>{k}</b><span>{v}</span></Field>)}
                  </StatusBox>
                  <Remaining><span>Remaining Time:</span><span>Unavailable</span></Remaining>
                  <Results>
                    <ResultsTitle>Hard Bin Results Legend</ResultsTitle>
                    {BINS.map(([n, c, a, b]) => (
                      <BinRow key={n}>
                        <BinName>{n}</BinName><Swatch $c={c} /><Cell $col={5}>{a}</Cell><Cell $col={7}>{b}</Cell>
                      </BinRow>
                    ))}
                  </Results>
                </InfoPanel>
              </Upper>
              <Lower>
                <Log>
                  <Mono>08/15/16 11:38:39 Polishing Probe Needles</Mono>
                  <Mono>08/15/16 11:38:46 Polishing Complete</Mono>
                  <Mono>08/15/16 12:12:20 Polishing Probe Needles</Mono>
                  <Mono>08/15/16 12:12:27 Polishing Complete</Mono>
                </Log>
                <VScroll $h={94} $ml={4}>
                  <Arrow dir="up" /><Trough /><Thumb $size={6} /><Arrow dir="down" />
                </VScroll>
                <Pad>
                  <PadButton $wide><Stippled>Test</Stippled></PadButton>
                  <PadButton><HatchTri kind="y1" /></PadButton>
                  <PadButton><svg width="12" height="7"><path d="M0 0h12v7H0z" /></svg></PadButton>
                  <PadButton><HatchTri kind="right" /></PadButton>
                  <PadButton><HatchTri kind="y2" /></PadButton>
                </Pad>
              </Lower>
              <StatusRow>
                <StatusCell $w={156}>Testing</StatusCell>
                <StatusNum $w={53} $ml={7}><Mono>X: 18</Mono></StatusNum>
                <StatusNum $w={53} $ml={6}><Mono>Y: 15</Mono></StatusNum>
                <StatusNum $w={60} $ml={6} $center><Mono>55</Mono></StatusNum>
              </StatusRow>
            </Content>
          </FrameInner>
        </Frame>

        <CpuWin $x={1093} $y={153} $w={123} $h={331}>
          <CpuGroup>
            <legend>CPU Usage</legend>
            <CpuScreen>
              <svg width="33" height="251" shapeRendering="crispEdges">
                <defs>
                  <pattern id="led" width="2" height="3" patternUnits="userSpaceOnUse">
                    <path d="M0 0h1v1h-1zM1 1h1v1h-1z" fill="#008a00" />
                  </pattern>
                </defs>
                <path d="M0 0h16v248H0zM17 0h16v248H17z" fill="url(#led)" />
                <path d="M0 249h16v1H0zM17 249h16v1H17z" fill="#00ff00" />
              </svg>
              <span>0 %</span>
            </CpuScreen>
          </CpuGroup>
        </CpuWin>
      </Desktop>

      <Taskbar>
        <Start><Flag />start</Start>
        <Quick><Ie /><Pc /><Outlook /></Quick>
        <Task $w={128}><FormIcon />Daemon Lock</Task>
        <Task $w={128}><VbIcon />IG-XL Tester S...</Task>
        <Task $w={128}><MonitorIcon /></Task>
        <Task $w={130} $on><ExceedIcon s={16} />Exceed</Task>
        <Task $w={129}><XlIcon />Teradyne IG-XL...</Task>
        <Task $w={129}><DocIcon />Teradyne_IG-X...</Task>
        <HelpSlot><HelpIcon /></HelpSlot>
        <Tray>
          <TrayIcons />
          <span>1:34 PM</span>
        </Tray>
      </Taskbar>
    </Screen>
  );
}
